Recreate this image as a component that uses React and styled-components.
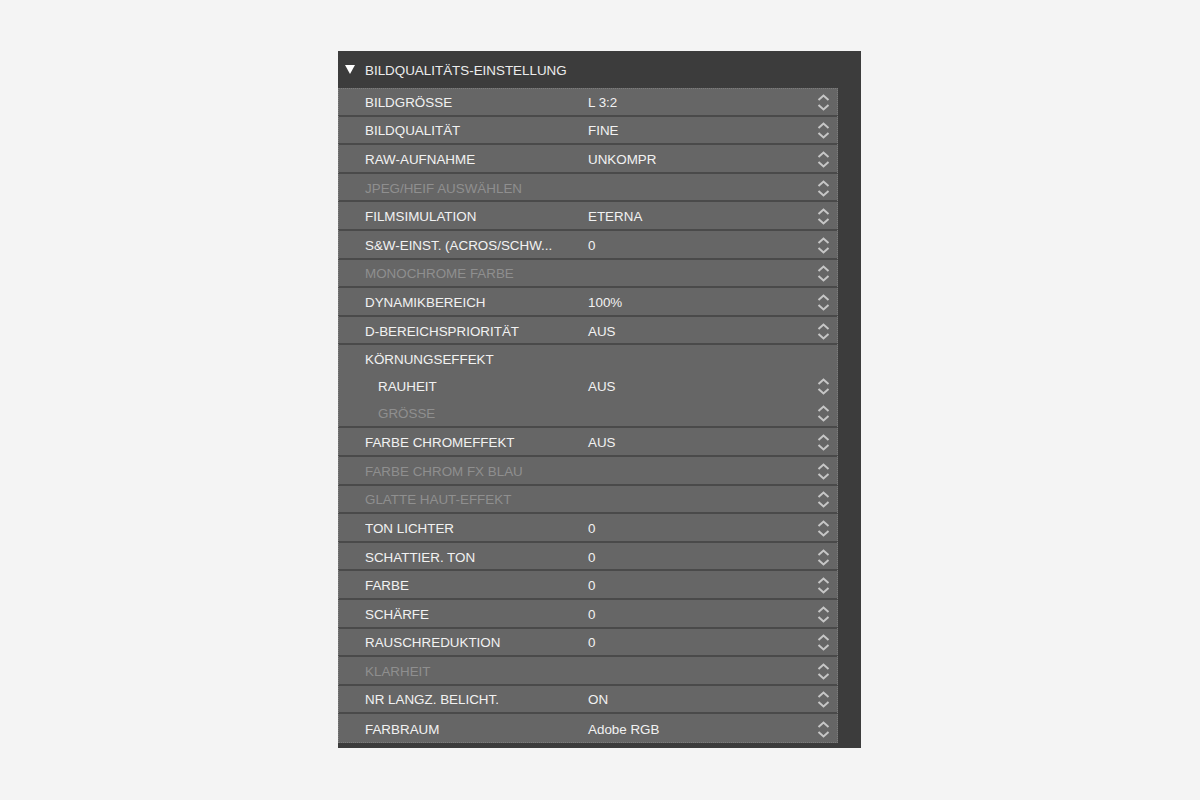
import React from "react";
import styled, { createGlobalStyle } from "styled-components";

const Global = createGlobalStyle`
  html, body { margin: 0; padding: 0; background: #f4f4f4; }
  body { font-family: "Liberation Sans", Arial, sans-serif; }
`;

const Page = styled.div`
  padding: 51px 0 0 338px;
  height: 800px;
  box-sizing: border-box;
`;

const Panel = styled.div`
  width: 523px;
  background: #3c3c3c;
  padding: 0 23px 5px 0;
  box-sizing: border-box;
`;

const Header = styled.div`
  height: 37px;
  display: flex;
  align-items: center;
  padding: 2px 0 0 7px;
  box-sizing: border-box;
  gap: 10px;
  color: #ececec;
  font-size: 13.4px;
`;

const Triangle = styled.span`
  width: 0;
  height: 0;
  border-left: 5px solid transparent;
  border-right: 5px solid transparent;
  border-top: 9px solid #ffffff;
  margin-top: -3px;
`;

const List = styled.div`
  background: #666666;
  outline: 1px dotted #7c7c7c;
  outline-offset: -1px;
`;

const Row = styled.div`
  height: 28.6px;
  box-sizing: border-box;
  border-bottom: 2px solid #4a4a4a;
  display: grid;
  grid-template-columns: 223px 1fr 13px;
  align-items: center;
  padding: 2px 8px 0 27px;
  font-size: 13.4px;
  &:last-child { border-bottom: none; }
`;

const Group = styled.div`
  border-bottom: 2px solid #4a4a4a;
`;

const GroupLine = styled.div`
  height: 27px;
  box-sizing: border-box;
  display: grid;
  grid-template-columns: ${(p) => (p.$sub ? "210px" : "223px")} 1fr 13px;
  align-items: center;
  padding: 2px 8px 0 ${(p) => (p.$sub ? "40px" : "27px")};
  font-size: 13.4px;
`;

const Label = styled.span`
  color: ${(p) => (p.$disabled ? "#8f8f8f" : "#f2f2f2")};
  white-space: nowrap;
  overflow: hidden;
`;

const Value = styled.span`
  color: #f2f2f2;
  white-space: nowrap;
`;

const Spin = () => (
  <svg width="13" height="17" viewBox="0 0 13 17" style={{ display: "block" }}>
    <polyline points="1.5,6 6.5,1.5 11.5,6" fill="none" stroke="#c6c6c6" strokeWidth="2" />
    <polyline points="1.5,11 6.5,15.5 11.5,11" fill="none" stroke="#c6c6c6" strokeWidth="2" />
  </svg>
);

const before = [
  ["BILDGRÖSSE", "L 3:2"],
  ["BILDQUALITÄT", "FINE"],
  ["RAW-AUFNAHME", "UNKOMPR"],
  ["JPEG/HEIF AUSWÄHLEN", "", true],
  ["FILMSIMULATION", "ETERNA"],
  ["S&W-EINST. (ACROS/SCHW...", "0"],
  ["MONOCHROME FARBE", "", true],
  ["DYNAMIKBEREICH", "100%"],
  ["D-BEREICHSPRIORITÄT", "AUS"],
];

const after = [
  ["FARBE CHROMEFFEKT", "AUS"],
  ["FARBE CHROM FX BLAU", "", true],
  ["GLATTE HAUT-EFFEKT", "", true],
  ["TON LICHTER", "0"],
  ["SCHATTIER. TON", "0"],
  ["FARBE", "0"],
  ["SCHÄRFE", "0"],
  ["RAUSCHREDUKTION", "0"],
  ["KLARHEIT", "", true],
  ["NR LANGZ. BELICHT.", "ON"],
  ["FARBRAUM", "Adobe RGB"],
];

const renderRow = ([label, value, disabled]) => (
  <Row key={label}>
    <Label $disabled={disabled}>{label}</Label>
    <Value>{value}</Value>
    <Spin />
  </Row>
);

export default function App() {
  return (
    <Page>
      <Global />
      <Panel>
        <Header>
          <Triangle />
          <span>BILDQUALITÄTS-EINSTELLUNG</span>
        </Header>
        <List>
          {before.map(renderRow)}
          <Group>
            <GroupLine>
              <Label>KÖRNUNGSEFFEKT</Label>
            </GroupLine>
            <GroupLine $sub>
              <Label>RAUHEIT</Label>
              <Value>AUS</Value>
              <Spin />
            </GroupLine>
            <GroupLine $sub>
              <Label $disabled>GRÖSSE</Label>
              <Value />
              <Spin />
            </GroupLine>
          </Group>
          {after.map(renderRow)}
        </List>
      </Panel>
    </Page>
  );
}
